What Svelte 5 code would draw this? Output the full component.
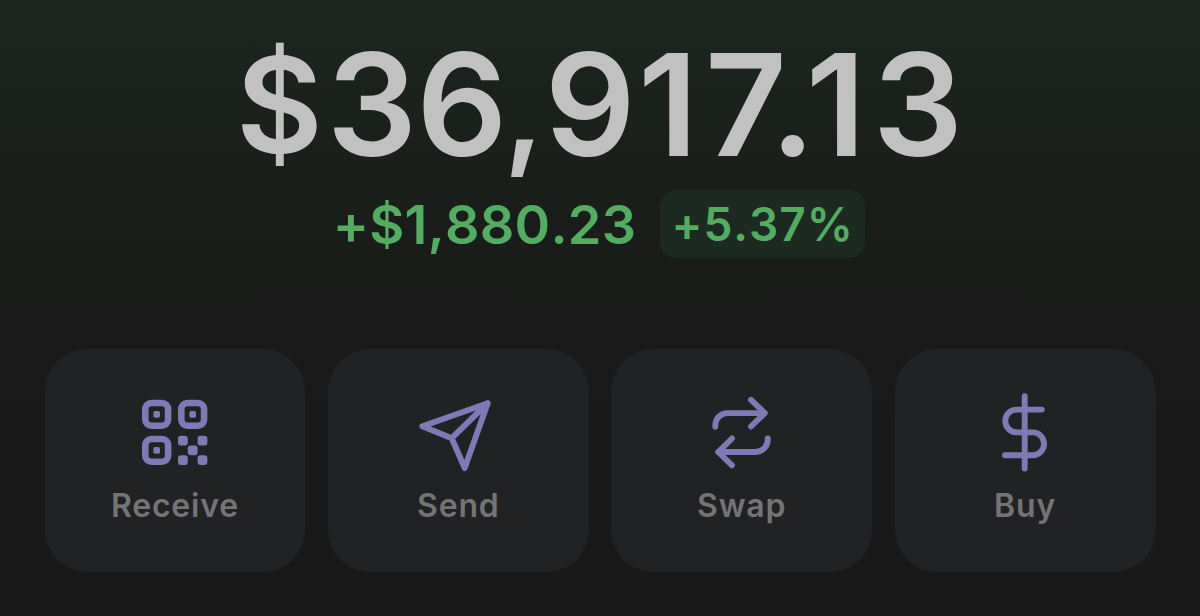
<script>
  // Display-size spacing for the headline figure, in px after each glyph
  const balance = [
    { char: "$", gap: 4, symbol: true },
    { char: "3", gap: -0.5 },
    { char: "6", gap: -4 },
    { char: ",", gap: 0.5, comma: true },
    { char: "9", gap: 2.5 },
    { char: "1", gap: 7 },
    { char: "7", gap: -17 },
    { char: ".", gap: -9.5 },
    { char: "1", gap: 7 },
    { char: "3", gap: 1 },
  ];
  let change = $state("+$1,880.23");
  let percent = $state("+5.37%");

  const actions = [
    { id: "receive", label: "Receive" },
    { id: "send", label: "Send" },
    { id: "swap", label: "Swap" },
    { id: "buy", label: "Buy" },
  ];

  const finders = [
    [12, 14.7],
    [48, 14.7],
    [12, 50.7],
  ];

  const modules = [
    [48, 50.7],
    [67.6, 50.7],
    [57.8, 60.4],
    [48, 70.2],
    [67.6, 70.2],
  ];
</script>

<main class="wallet">
  <h1 class="balance">
    {#each balance as glyph}<span
        class:balance__symbol={glyph.symbol}
        class:balance__comma={glyph.comma}
        style="letter-spacing: {glyph.gap}px">{glyph.char}</span
      >{/each}
  </h1>

  <div class="change">
    <span class="change__amount">{change}</span>
    <span class="change__percent">{percent}</span>
  </div>

  <nav class="actions">
    {#each actions as action (action.id)}
      <button class="action">
        <svg class="action__icon" viewBox="0 0 90 90" aria-hidden="true">
          {#if action.id === "receive"}
            {#each finders as [x, y]}
              <rect
                x={x + 3.3}
                y={y + 3.3}
                width="22.8"
                height="22.8"
                rx="6.2"
                stroke-width="6.6"
              />
              <rect class="fill" x={x + 11.4} y={y + 11.4} width="6.6" height="6.6" rx="1.6" />
            {/each}
            {#each modules as [x, y]}
              <rect class="fill" {x} {y} width="9.8" height="9.8" rx="2.9" />
            {/each}
          {:else if action.id === "send"}
            <path d="M74.7 18.2 9.4 41.2 38.7 53.2 51.7 83ZM74.7 18.2 38.7 53.2" />
          {:else if action.id === "swap"}
            <path d="M54 14.8 67.8 28.1 54 41.5M67.8 28.1H30.5a12.2 12.2 0 0 0-12.2 12.2v1.5" />
            <path d="M35 53.5 21.2 67 35 80.3M21.2 67h37.3a12.2 12.2 0 0 0 12.2-12.2v-1.3" />
          {:else}
            <path
              d="M44.7 11.3v72.2M61.8 24.6H36.7a11.4 11.4 0 0 0 0 22.8h16a11.4 11.4 0 0 1 0 22.8H25"
            />
          {/if}
        </svg>
        <span class="action__label">{action.label}</span>
      </button>
    {/each}
  </nav>
</main>

<style>
  :global(body) {
    margin: 0;
    background: #191919;
  }

  .wallet {
    box-sizing: border-box;
    height: 616px;
    padding: 32px 44.5px 0;
    display: flex;
    flex-direction: column;
    overflow: hidden;
    font-family: Inter, "Liberation Sans", sans-serif;
    background: linear-gradient(
      #1d271e 0,
      #1b241f 45px,
      #1b201c 140px,
      #1a1d1a 230px,
      #191a19 320px,
      #191919 420px
    );
  }

  .balance {
    margin: 0;
    height: 144px;
    line-height: 144px;
    font-size: 142px;
    font-weight: 600;
    font-kerning: none;
    text-align: center;
    white-space: nowrap;
    color: #c2c1c2;
  }

  .balance__symbol,
  .balance__comma {
    position: relative;
    top: -3px;
    line-height: 1;
    font-size: 0.94em;
  }

  .balance__comma {
    font-size: 0.9em;
  }

  .change {
    margin-top: 14px;
    height: 68px;
    display: flex;
    justify-content: center;
    align-items: center;
    gap: 24px;
    font-weight: 600;
    font-kerning: none;
    color: #53ad60;
  }

  .change__amount {
    font-size: 54px;
    line-height: 68px;
    letter-spacing: 0.2px;
    padding-top: 1px;
  }

  .change__percent {
    box-sizing: border-box;
    width: 205px;
    height: 68px;
    margin-right: 2px;
    border-radius: 16px;
    background: #1d2a21;
    font-size: 46px;
    line-height: 69px;
    letter-spacing: 1px;
    text-align: center;
  }

  .actions {
    margin-top: 91px;
    display: grid;
    grid-template-columns: repeat(4, 1fr);
    gap: 22.5px;
  }

  .action {
    box-sizing: border-box;
    height: 223px;
    padding: 36px 0 0;
    border: none;
    border-radius: 42px;
    background: #212224;
    display: flex;
    flex-direction: column;
    align-items: center;
    font-family: inherit;
    cursor: pointer;
  }

  .action__icon {
    width: 90px;
    height: 90px;
    fill: none;
    stroke: #8179b5;
    stroke-width: 5.9;
    stroke-linecap: round;
    stroke-linejoin: round;
  }

  .fill {
    fill: #8179b5;
    stroke: none;
  }

  .action__label {
    margin-top: 11px;
    font-size: 32px;
    line-height: 40px;
    font-weight: 600;
    letter-spacing: 0.8px;
    color: #747476;
  }
</style>
